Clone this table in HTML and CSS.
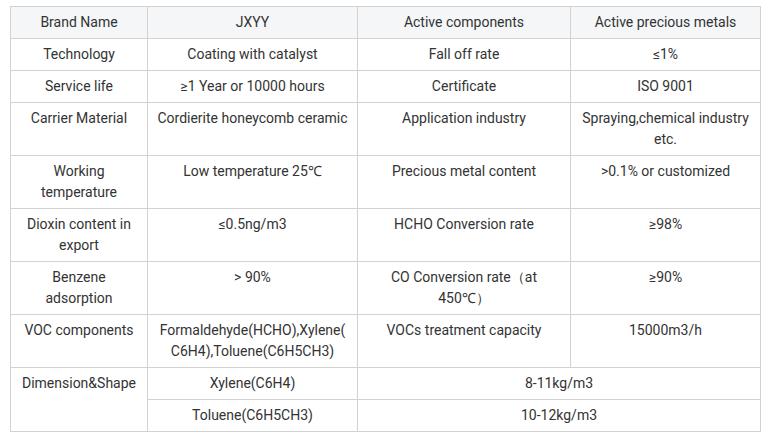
FILE: index.html
```html
<!DOCTYPE html>
<html>
<head>
<meta charset="utf-8">
<link rel="stylesheet" href="styles.css">
</head>
<body>
<table class="spec">
<colgroup>
<col class="c1"><col class="c2"><col class="c3"><col class="c4">
</colgroup>
<tr class="head"><td>Brand Name</td><td>JXYY</td><td>Active components</td><td>Active precious metals</td></tr>
<tr><td>Technology</td><td>Coating with catalyst</td><td>Fall off rate</td><td>≤1%</td></tr>
<tr><td>Service life</td><td>≥1 Year or 10000 hours</td><td>Certificate</td><td>ISO 9001</td></tr>
<tr><td>Carrier Material</td><td>Cordierite honeycomb ceramic</td><td>Application industry</td><td>Spraying,chemical industry etc.</td></tr>
<tr><td>Working temperature</td><td>Low temperature 25℃</td><td>Precious metal content</td><td>&gt;0.1% or customized</td></tr>
<tr><td>Dioxin content in export</td><td>≤0.5ng/m3</td><td>HCHO Conversion rate</td><td>≥98%</td></tr>
<tr><td>Benzene adsorption</td><td>&gt; 90%</td><td>CO Conversion rate（at 450℃）</td><td>≥90%</td></tr>
<tr><td>VOC components</td><td>Formaldehyde(HCHO),Xylene( C6H4),Toluene(C6H5CH3)</td><td>VOCs treatment capacity</td><td>15000m3/h</td></tr>
<tr><td rowspan="2">Dimension&amp;Shape</td><td>Xylene(C6H4)</td><td colspan="2">8-11kg/m3</td></tr>
<tr><td>Toluene(C6H5CH3)</td><td colspan="2">10-12kg/m3</td></tr>
</table>
</body>
</html>
```
FILE: styles.css
```css
html, body {
  margin: 0;
  padding: 0;
  background: #fff;
}
body {
  padding: 6px 0 0 10px;
  font-family: Roboto, "Liberation Sans", sans-serif;
  font-size: 14px;
  color: #333;
}
.spec {
  border-collapse: collapse;
  table-layout: fixed;
  width: 750px;
}
.c1 { width: 137px; }
.c2 { width: 210px; }
.c3 { width: 213px; }
.c4 { width: 190px; }
.spec td {
  border: 1px solid #d2d2d2;
  padding: 5px 6px;
  line-height: 21px;
  text-align: center;
  vertical-align: top;
}
.spec td:first-child {
  padding-left: 10px;
  padding-right: 10px;
}
.head td {
  background: #f5f6f8;
}
```
